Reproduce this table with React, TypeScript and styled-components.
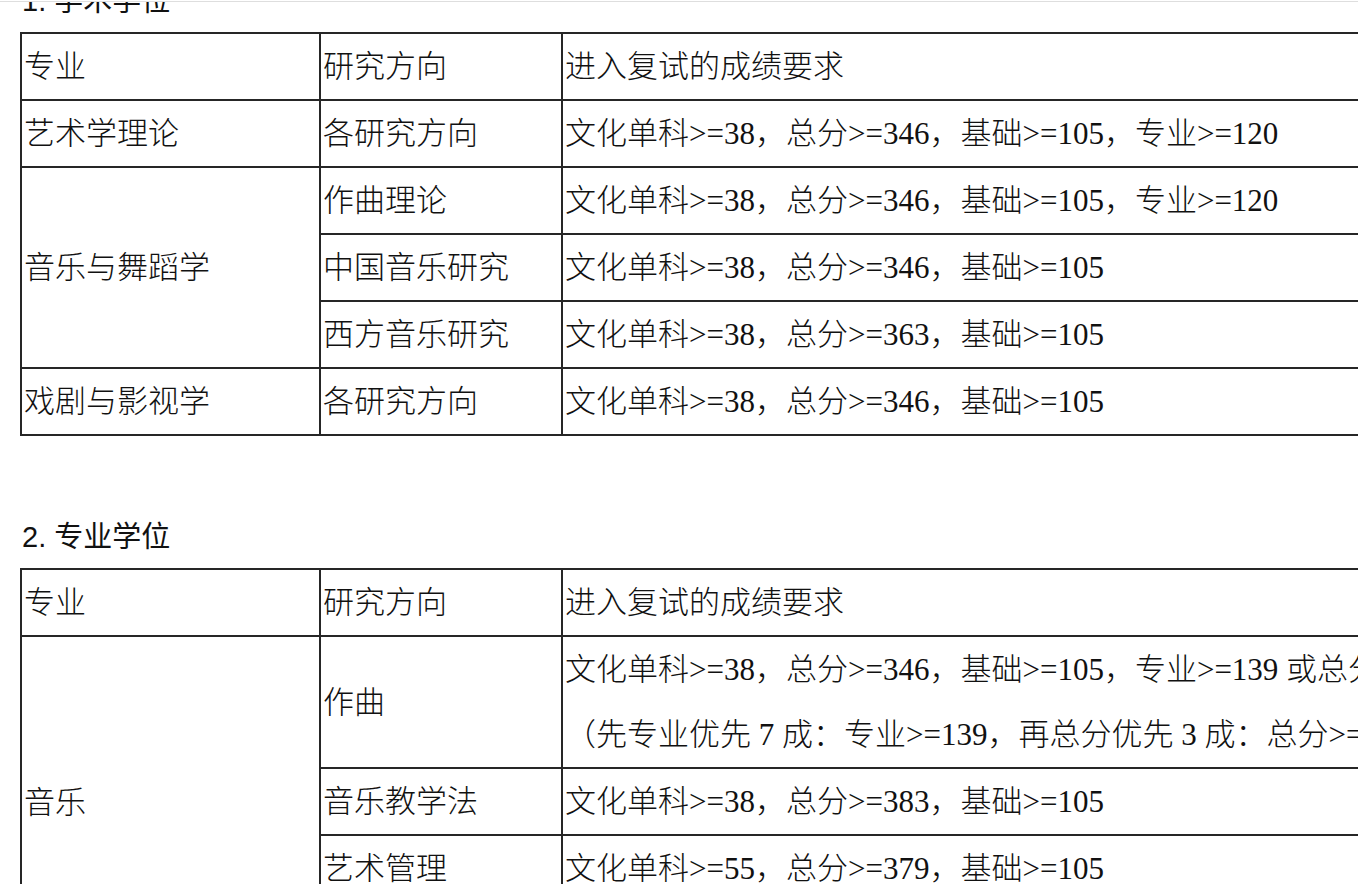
import React from 'react';
import styled, { createGlobalStyle } from 'styled-components';

const GlobalStyle = createGlobalStyle`
  html, body {
    margin: 0;
    padding: 0;
    background: #fff;
    overflow: hidden;
  }
`;

const Page = styled.div`
  margin-top: 1px;
  border-top: 1px solid #dedede;
  height: 882px;
  overflow: hidden;
  padding-left: 20px;
`;

const Content = styled.div`
  margin-top: -21px;
`;

const Heading = styled.h2`
  margin: 0 0 11px;
  padding-left: 2px;
  height: 40px;
  line-height: 40px;
  font-family: 'Liberation Sans', 'Noto Sans CJK SC', sans-serif;
  font-size: 29px;
  font-weight: 400;
  color: #111;
  white-space: nowrap;
`;

const Table = styled.table<{ gap?: number }>`
  border-collapse: collapse;
  table-layout: fixed;
  width: 1640px;
  margin-bottom: ${({ gap = 0 }) => gap}px;
  font-family: 'Liberation Serif', 'Noto Sans CJK SC', serif;
  font-size: 31px;
  font-weight: 300;
  color: #111;
`;

const Cell = styled.td`
  border: 2px solid #262626;
  padding: 0 2px;
  line-height: 65px;
  vertical-align: middle;
  white-space: nowrap;
  overflow: hidden;
`;

type Row = { major?: string; span?: number; dir: string; req: React.ReactNode };

const academic: Row[] = [
  { major: '艺术学理论', dir: '各研究方向', req: '文化单科>=38，总分>=346，基础>=105，专业>=120' },
  { major: '音乐与舞蹈学', span: 3, dir: '作曲理论', req: '文化单科>=38，总分>=346，基础>=105，专业>=120' },
  { dir: '中国音乐研究', req: '文化单科>=38，总分>=346，基础>=105' },
  { dir: '西方音乐研究', req: '文化单科>=38，总分>=363，基础>=105' },
  { major: '戏剧与影视学', dir: '各研究方向', req: '文化单科>=38，总分>=346，基础>=105' },
];

const professional: Row[] = [
  {
    major: '音乐',
    span: 4,
    dir: '作曲',
    req: (
      <>
        文化单科&gt;=38，总分&gt;=346，基础&gt;=105，专业&gt;=139 或总分&gt;=379
        <br />
        （先专业优先 7 成：专业&gt;=139，再总分优先 3 成：总分&gt;=379）
      </>
    ),
  },
  { dir: '音乐教学法', req: '文化单科>=38，总分>=383，基础>=105' },
  { dir: '艺术管理', req: '文化单科>=55，总分>=379，基础>=105' },
  { dir: '音乐表演', req: '文化单科>=38，总分>=346，基础>=105' },
];

const ScoreTable = ({ rows, gap }: { rows: Row[]; gap?: number }) => (
  <Table gap={gap}>
    <colgroup>
      <col style={{ width: 299 }} />
      <col style={{ width: 242 }} />
      <col style={{ width: 1099 }} />
    </colgroup>
    <tbody>
      <tr>
        <Cell>专业</Cell>
        <Cell>研究方向</Cell>
        <Cell>进入复试的成绩要求</Cell>
      </tr>
      {rows.map((r, i) => (
        <tr key={i}>
          {r.major && <Cell rowSpan={r.span || 1}>{r.major}</Cell>}
          <Cell>{r.dir}</Cell>
          <Cell>{r.req}</Cell>
        </tr>
      ))}
    </tbody>
  </Table>
);

const App = () => (
  <>
    <GlobalStyle />
    <Page>
      <Content>
        <Heading>1. 学术学位</Heading>
        <ScoreTable rows={academic} gap={81} />
        <Heading>2. 专业学位</Heading>
        <ScoreTable rows={professional} />
      </Content>
    </Page>
  </>
);

export default App;
